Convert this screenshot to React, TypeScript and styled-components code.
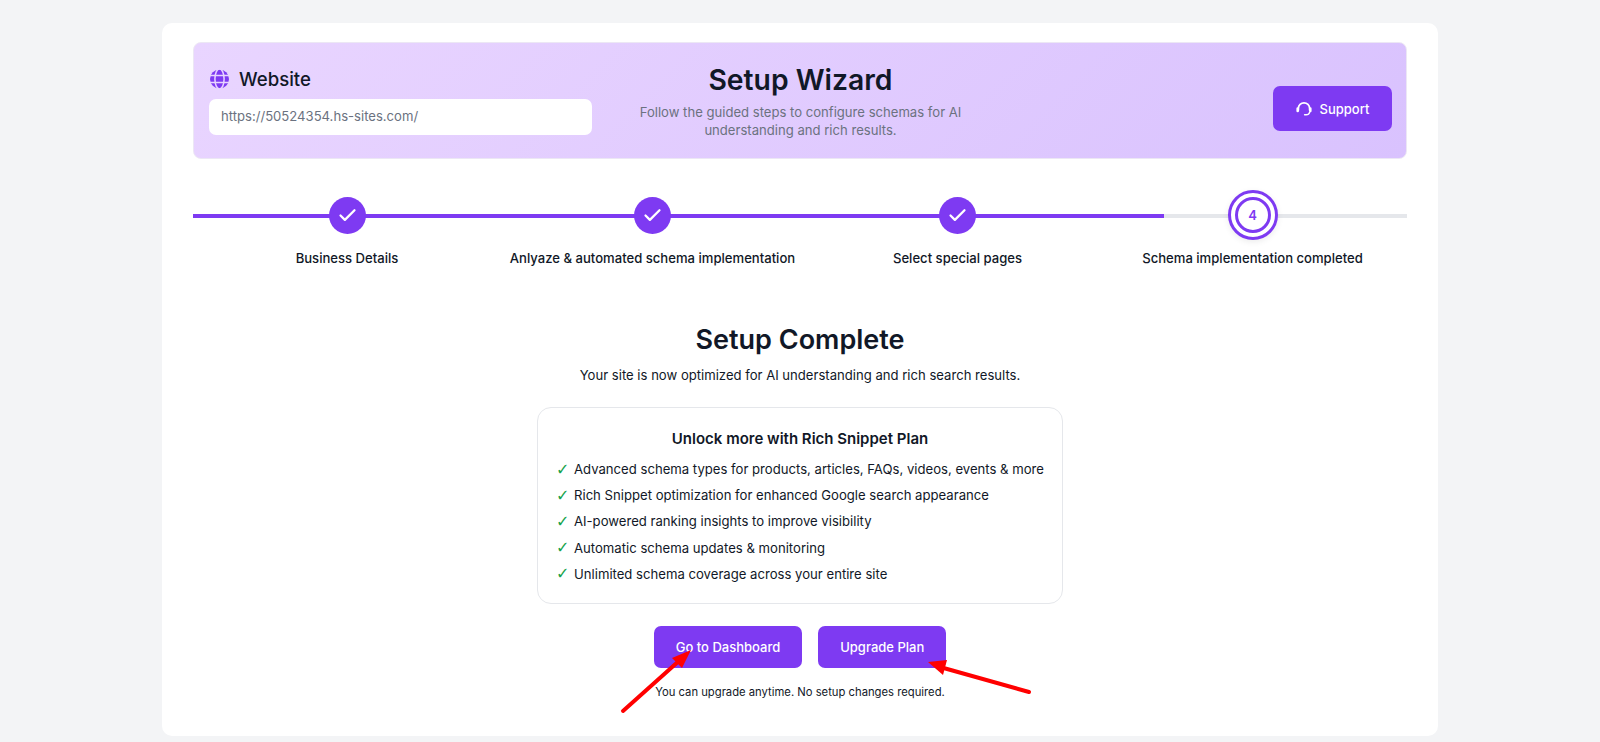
import { createGlobalStyle, styled } from "styled-components";
import { Check } from "lucide-react";

const purple = "#7e3af2";

const GlobalStyle = createGlobalStyle`
  * {
    box-sizing: border-box;
  }
  html,
  body {
    margin: 0;
    height: 100%;
    overflow: hidden;
    background: #f3f4f6;
    font-family: Inter, "Liberation Sans", sans-serif;
    color: #111827;
  }
`;
const Page = styled.div`
  position: relative;
  height: 742px;
  padding: 23px 162px 6px;
`;
const Card = styled.main`
  height: 713px;
  background: #fff;
  border-radius: 10px;
  padding: 19px 31px 0;
`;
const Hero = styled.header`
  height: 117px;
  border-radius: 8px;
  border: 1px solid #ece7f5;
  background: linear-gradient(135deg, #e9d5ff, #d9c2fe);
  display: grid;
  grid-template-columns: 383px 1fr 383px;
  align-items: center;
  padding: 0 14px 0 15px;
`;
const WebsiteBlock = styled.div`
  display: flex;
  flex-direction: column;
  gap: 8px;
`;
const WebsiteLabel = styled.div`
  display: flex;
  align-items: center;
  gap: 10px;
  padding-left: 1px;
  font-size: 18.6px;
  font-weight: 500;
  line-height: 24px;
`;
const UrlBox = styled.div`
  height: 36px;
  background: #fff;
  border-radius: 7px;
  padding: 0 12px 1px;
  display: flex;
  align-items: center;
  font-size: 13.1px;
  color: #6b7280;
`;
const HeroCenter = styled.div`
  text-align: center;
`;
const HeroTitle = styled.h1`
  margin: 0 0 5px;
  font-size: 28.3px;
  line-height: 36px;
  font-weight: 600;
`;
const HeroText = styled.p`
  margin: 0 auto;
  width: 340px;
  font-size: 13.1px;
  line-height: 18px;
  color: #6b7280;
`;
const SupportButton = styled.button`
  justify-self: end;
  align-self: end;
  margin-bottom: 27px;
  height: 45px;
  width: 119px;
  border: none;
  border-radius: 7px;
  background: ${purple};
  color: #fff;
  font: 500 13px Inter, sans-serif;
  display: flex;
  align-items: center;
  justify-content: center;
  gap: 8px;
`;
const Stepper = styled.section`
  position: relative;
  margin-top: 31px;
  display: grid;
  grid-template-columns: 308px 303px 307px 283px 13px;
`;
const Track = styled.div`
  position: absolute;
  left: 0;
  right: 0;
  top: 24px;
  height: 4px;
  background: #e5e7eb;
`;
const Progress = styled.div`
  height: 100%;
  background: ${purple};
`;
const Step = styled.div`
  position: relative;
  display: flex;
  flex-direction: column;
  align-items: center;
`;
const NodeSlot = styled.div`
  height: 50px;
  display: flex;
  align-items: center;
  justify-content: center;
`;
const DoneNode = styled.div`
  width: 37px;
  height: 37px;
  border-radius: 50%;
  background: ${purple};
  color: #fff;
  display: flex;
  align-items: center;
  justify-content: center;
`;
const ActiveNode = styled.div`
  width: 50px;
  height: 50px;
  border-radius: 50%;
  border: 3px solid ${purple};
  background: #fff;
  box-shadow: 0 2px 6px rgba(0, 0, 0, 0.08);
  display: flex;
  align-items: center;
  justify-content: center;
  color: ${purple};
  font-size: 13px;
  font-weight: 600;
  span {
    width: 36px;
    height: 36px;
    border-radius: 50%;
    border: 3px solid ${purple};
    display: flex;
    align-items: center;
    justify-content: center;
  }
`;
const StepLabel = styled.div`
  margin-top: 8px;
  font-size: 13.1px;
  font-weight: 500;
  line-height: 20px;
  white-space: nowrap;
`;
const Complete = styled.section`
  display: flex;
  flex-direction: column;
  align-items: center;
  margin-top: 54px;
`;
const CompleteTitle = styled.h2`
  margin: 0;
  font-size: 27px;
  line-height: 36px;
  font-weight: 600;
`;
const CompleteText = styled.p`
  margin: 7px 0 0;
  font-size: 13.1px;
  line-height: 20px;
`;
const PlanBox = styled.div`
  width: 526px;
  height: 197px;
  margin-top: 22px;
  border: 1px solid #e5e7eb;
  border-radius: 14px;
  padding: 21px 18px 0;
`;
const PlanTitle = styled.h3`
  margin: 0 0 7px;
  text-align: center;
  font-size: 15px;
  line-height: 20px;
  font-weight: 600;
`;
const PlanList = styled.ul`
  list-style: none;
  margin: 0;
  padding: 0;
`;
const PlanItem = styled.li`
  height: 26.2px;
  display: flex;
  align-items: center;
  gap: 7px;
  font-size: 13.13px;
`;
const Tick = styled.span`
  flex: none;
  width: 11px;
  color: #16a34a;
  font: 16px "DejaVu Sans", sans-serif;
`;
const Actions = styled.div`
  display: flex;
  gap: 16px;
  margin-top: 22px;
`;
const ActionButton = styled.button`
  height: 42px;
  padding: 0 22px;
  border: none;
  border-radius: 7px;
  background: ${purple};
  color: #fff;
  font: 500 13px Inter, sans-serif;
`;
const Note = styled.p`
  margin: 16px 0 0;
  font-size: 11.25px;
  line-height: 16px;
`;
const Annotations = styled.svg`
  position: absolute;
  left: 0;
  top: 0;
  width: 1600px;
  height: 742px;
  pointer-events: none;
`;

const steps = ["Business Details", "Anlyaze & automated schema implementation", "Select special pages"];
const perks = [
  "Advanced schema types for products, articles, FAQs, videos, events & more",
  "Rich Snippet optimization for enhanced Google search appearance",
  "AI-powered ranking insights to improve visibility",
  "Automatic schema updates & monitoring",
  "Unlimited schema coverage across your entire site",
];

function GlobeIcon() {
  return (
    <svg width="19" height="20" viewBox="0 0 19 20">
      <circle cx="9.5" cy="10" r="9.5" fill={purple} />
      <g fill="none" stroke="#e8d5ff" strokeWidth="1.5">
        <ellipse cx="9.5" cy="10" rx="4.6" ry="10" />
        <path d="M0 6.4H19M0 13.6H19" />
      </g>
    </svg>
  );
}

function HeadsetIcon() {
  return (
    <svg width="16" height="15" viewBox="0 0 16 15" fill="none" stroke="#fff" strokeLinecap="round">
      <path d="M2.4 9V7.4a5.6 5.6 0 0 1 11.2 0V9" strokeWidth="1.7" />
      <path d="M1.7 7.6V10M14.3 7.6V10" strokeWidth="2.6" />
      <path d="M13.6 11.4c-.4 1.5-1.6 2.4-3.4 2.4H8.6" strokeWidth="1.5" />
    </svg>
  );
}

function App() {
  return (
    <Page>
      <GlobalStyle />
      <Card>
        <Hero>
          <WebsiteBlock>
            <WebsiteLabel>
              <GlobeIcon />
              Website
            </WebsiteLabel>
            <UrlBox>https://50524354.hs-sites.com/</UrlBox>
          </WebsiteBlock>
          <HeroCenter>
            <HeroTitle>Setup Wizard</HeroTitle>
            <HeroText>Follow the guided steps to configure schemas for AI understanding and rich results.</HeroText>
          </HeroCenter>
          <SupportButton>
            <HeadsetIcon />
            Support
          </SupportButton>
        </Hero>
        <Stepper>
          <Track>
            <Progress style={{ width: `${(971 / 1214) * 100}%` }} />
          </Track>
          {steps.map((label) => (
            <Step key={label}>
              <NodeSlot>
                <DoneNode>
                  <Check size={21} strokeWidth={2.6} />
                </DoneNode>
              </NodeSlot>
              <StepLabel>{label}</StepLabel>
            </Step>
          ))}
          <Step>
            <NodeSlot>
              <ActiveNode>
                <span>4</span>
              </ActiveNode>
            </NodeSlot>
            <StepLabel>Schema implementation completed</StepLabel>
          </Step>
        </Stepper>
        <Complete>
          <CompleteTitle>Setup Complete</CompleteTitle>
          <CompleteText>Your site is now optimized for AI understanding and rich search results.</CompleteText>
          <PlanBox>
            <PlanTitle>Unlock more with Rich Snippet Plan</PlanTitle>
            <PlanList>
              {perks.map((perk) => (
                <PlanItem key={perk}>
                  <Tick>✓</Tick>
                  {perk}
                </PlanItem>
              ))}
            </PlanList>
          </PlanBox>
          <Actions>
            <ActionButton>Go to Dashboard</ActionButton>
            <ActionButton>Upgrade Plan</ActionButton>
          </Actions>
          <Note>You can upgrade anytime. No setup changes required.</Note>
        </Complete>
      </Card>
      <Annotations viewBox="0 0 1600 742">
        <path d="M623 711L680 660" stroke="#ff0000" strokeWidth="4" strokeLinecap="round" />
        <path d="M691 650L672 658L682 668Z" fill="#ff0000" />
        <path d="M1029 692L940 667" stroke="#ff0000" strokeWidth="4" strokeLinecap="round" />
        <path d="M928 662L947 660L943 675Z" fill="#ff0000" />
      </Annotations>
    </Page>
  );
}
export default App;
